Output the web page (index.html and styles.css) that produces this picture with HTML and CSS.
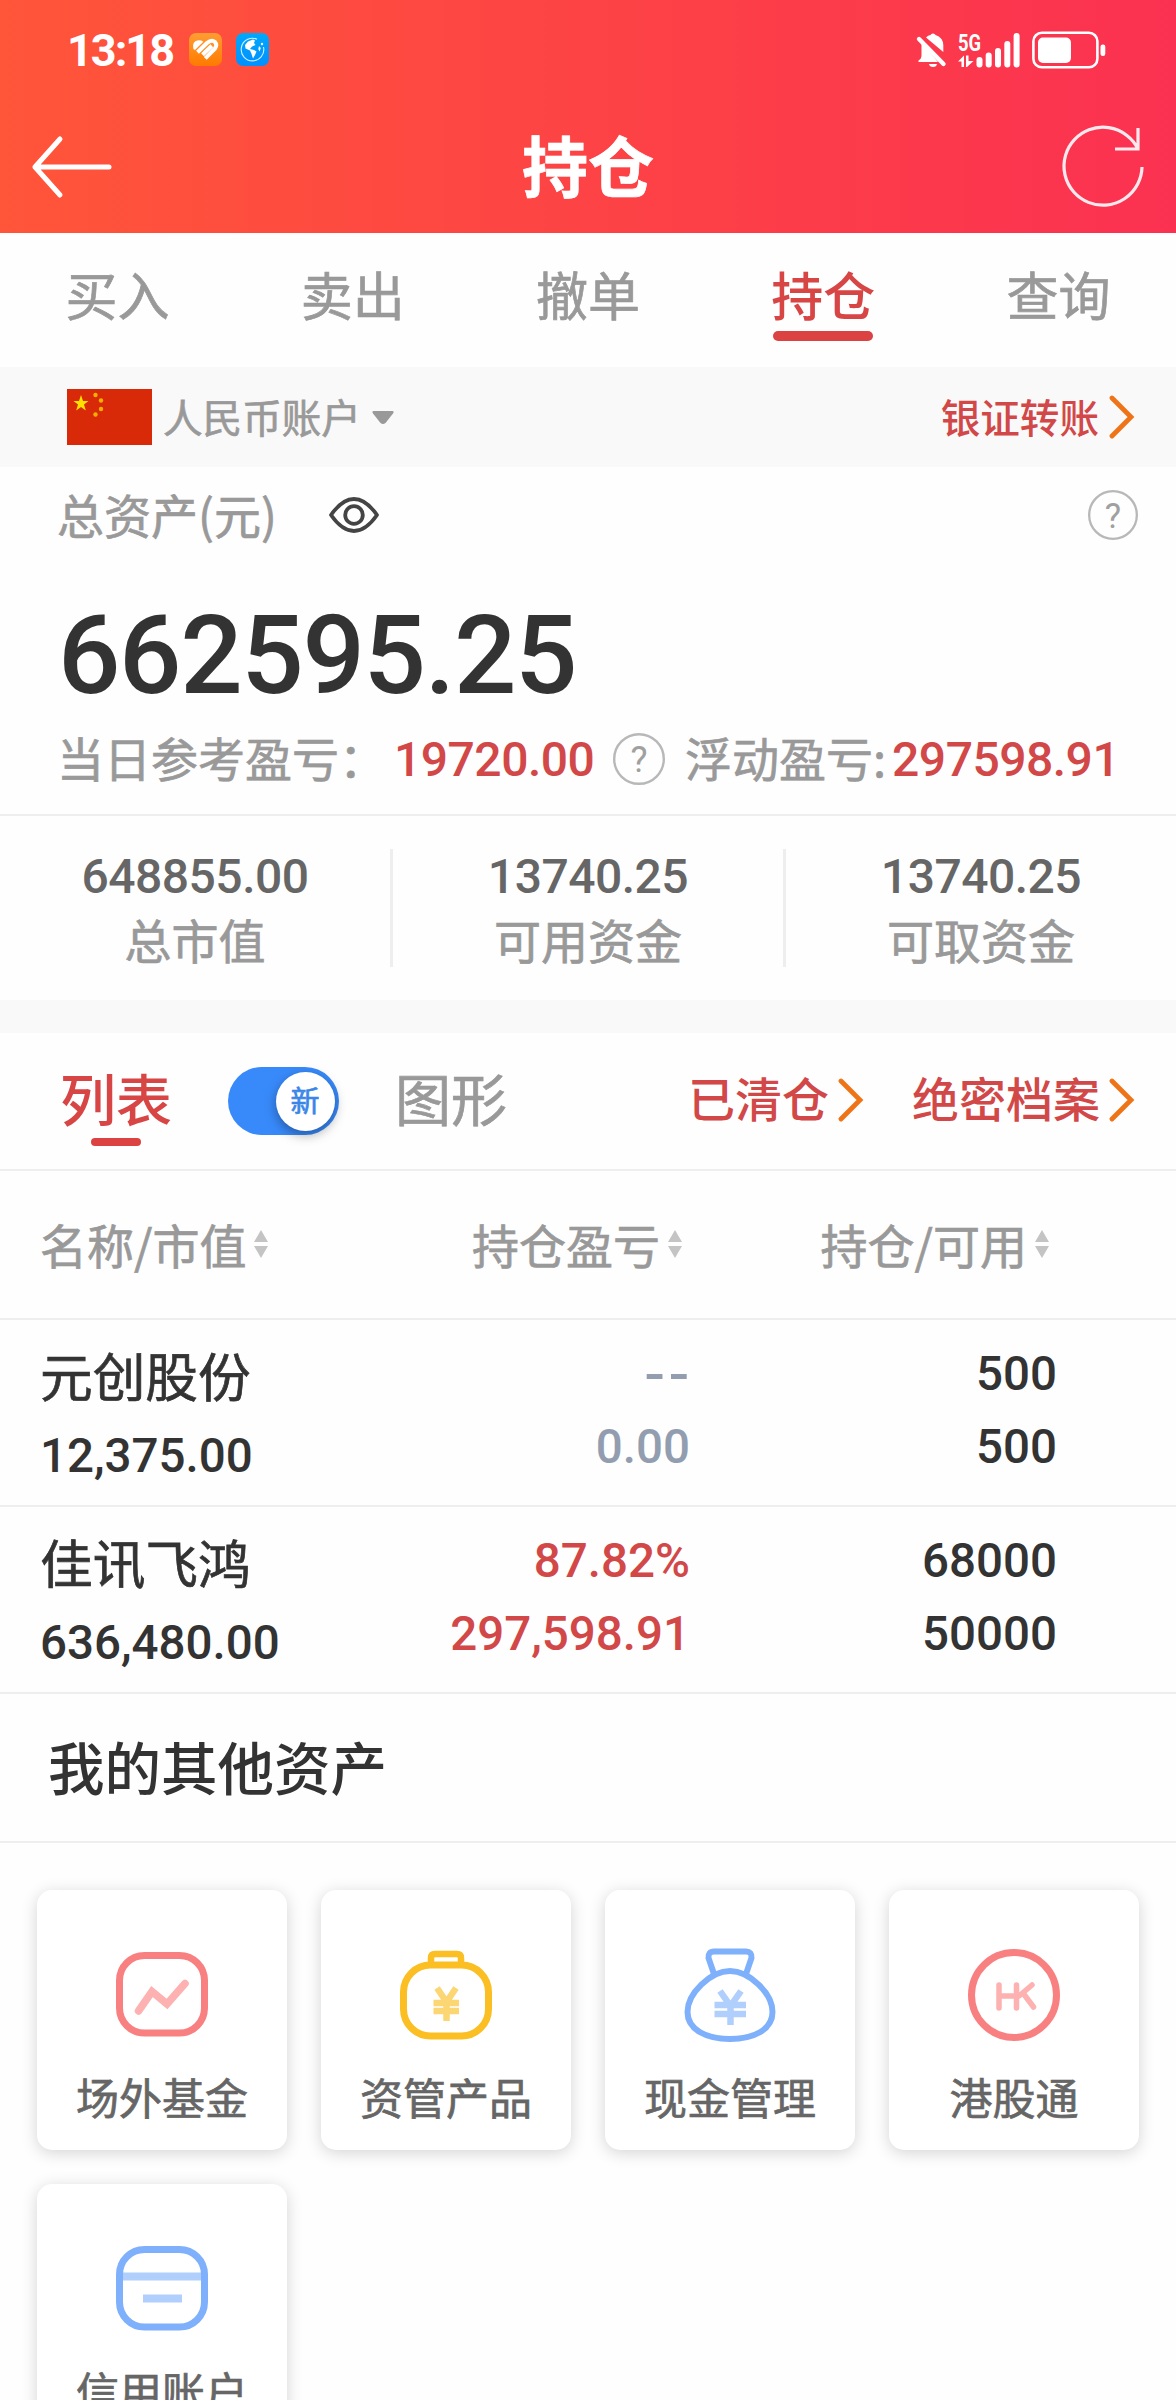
FILE: index.html
```
<!DOCTYPE html>
<html lang="zh-CN">
<head>
<meta charset="utf-8">
<title>持仓</title>
<link rel="stylesheet" href="styles.css">
</head>
<body>
<svg class="defs" aria-hidden="true">
  <symbol id="chevron" viewBox="0 0 26 44"><path d="M3 3 L22 22 L3 41" fill="none" stroke="#ef7418" stroke-width="4.8" stroke-linecap="round" stroke-linejoin="miter"/></symbol>
  <symbol id="sort" viewBox="0 0 14 28"><path d="M7 0L14 12H0zM7 28L14 16H0z" fill="#c4c4c4"/></symbol>
</svg>

<header class="header">
  <div class="status">
    <span class="time">13:18</span>
    <svg class="app-icon app-orange" width="33" height="33" viewBox="0 0 33 33">
      <defs><linearGradient id="og" x2="0" y2="1"><stop stop-color="#ff9d33"/><stop offset="1" stop-color="#ff7a00"/></linearGradient></defs>
      <rect width="33" height="33" rx="7" fill="url(#og)"/>
      <path d="M4.300 15.500Q2.800 8 9.500 7.300Q12.500 7.200 14.300 8.700L6.500 16.500Q5 17.500 4.300 15.500z" fill="#fff"/>
      <path d="M8.500 19.300L18 10Q22.500 6 26 9Q28.500 12 26 15.500L16.300 25.300M13.500 21.800L22.800 12.800" fill="none" stroke="#fff" stroke-width="4" stroke-linejoin="round"/>
    </svg>
    <svg class="app-icon app-blue" width="33" height="33" viewBox="0 0 33 33">
      <defs><linearGradient id="bg" x2="0" y2="1"><stop stop-color="#00a8fb"/><stop offset="1" stop-color="#0090ff"/></linearGradient></defs>
      <rect width="33" height="33" rx="7" fill="url(#bg)"/>
      <path d="M21 6.200A11.300 11.300 0 1 0 27.500 14" fill="none" stroke="#d5efff" stroke-width="1.100"/>
      <path d="M9 12L12 8.500L17 6.500L19 7.500L18 10L19.500 12L16 13.500L14 16L18 17L20.500 18.500L19 22L17 25.500L15.500 21L14 17.500L9.500 15.500z" fill="#fff"/>
      <path d="M23 13L24.800 15L23.500 18.500L22.300 16z" fill="#fff"/><circle cx="26" cy="11" r="1.200" fill="#fff"/>
    </svg>
    <svg class="indicators" width="190" height="38" viewBox="0 0 190 38" fill="#fff">
      <path d="M10 6.500Q12 4 14.500 4Q15 2.500 17 2.500T19.500 4Q27 6.500 27.300 14L27.300 21z"/>
      <path d="M5.500 11L22 31H2.500V29.500Q5.500 28 5.500 24z"/>
      <path d="M13 33H21Q20.500 36 17 36T13 33z"/>
      <path d="M3 8L27.500 33" stroke="#fff" stroke-width="4.400" stroke-linecap="round"/>
      <text class="net" x="42" y="19.500" textLength="23" lengthAdjust="spacingAndGlyphs">5G</text>
      <path d="M42 30.500L48 24.500V36H45.500V30.500zM50 24.500H52.500V30H57.500L51 36H50z"/>
      <rect x="60.500" y="26" width="6" height="10.500" rx="3"/><rect x="69.700" y="21.500" width="6" height="15" rx="3"/><rect x="79" y="17" width="6" height="19.500" rx="3"/><rect x="88.300" y="10" width="6" height="26.500" rx="3"/><rect x="97.600" y="2" width="6" height="34.500" rx="3"/>
      <rect x="117.400" y="1.800" width="64" height="34.500" rx="8.500" fill="none" stroke="#fff" stroke-width="2.600"/>
      <rect x="122" y="6.500" width="33" height="25.500" rx="5"/>
      <rect x="184.500" y="13.500" width="4.800" height="11.500" rx="2.200"/>
    </svg>
  </div>
  <div class="titlebar">
    <svg width="82" height="84" viewBox="0 0 82 84"><path d="M29 15L4 43L29 71M4 43H78" fill="none" stroke="#fff" stroke-width="5" stroke-linecap="round" stroke-linejoin="round"/></svg>
    <h1>持仓</h1>
    <svg width="82" height="84" viewBox="0 0 82 84"><path d="M79 43A39 39 0 1 1 75 25M75 4V25H52" fill="none" stroke="#ffe9ee" stroke-width="3.200"/></svg>
  </div>
</header>

<nav class="tabs">
  <a>买入</a><a>卖出</a><a>撤单</a><a class="on">持仓</a><a>查询</a>
</nav>

<section class="account">
  <svg class="flag" width="85" height="56" viewBox="0 0 85 56"><rect width="85" height="56" fill="#d82a08"/>
    <g fill="#ffe000"><path d="M14 6L16 12H21.500L17 15.500L18.800 21.500L14 18L9.200 21.500L11 15.500L6.500 12H12z"/><g fill="#f3b000"><circle cx="28.500" cy="6" r="2.200"/><circle cx="34" cy="11.500" r="2.200"/><circle cx="34" cy="20" r="2.200"/><circle cx="28.500" cy="25.500" r="2.200"/></g></g></svg>
  <span class="account-name">人民币账户</span>
  <svg class="caret" width="22" height="13" viewBox="0 0 22 13"><path d="M1.500 0H20.500Q22.500 0.500 21 2.500L13.500 12Q11 14 8.500 12L1 2.500Q-0.500 0.500 1.500 0z" fill="#999"/></svg>
  <a class="link push"><span>银证转账</span><svg width="26" height="44"><use href="#chevron"/></svg></a>
</section>

<section class="summary">
  <div class="asset-label">
    <span>总资产(元)</span>
    <svg class="eye" width="50" height="36" viewBox="0 0 50 36" fill="none" stroke="#444" stroke-width="3.800"><path d="M2 18C9 8 16 2 25 2S41 8 48 18C41 28 34 34 25 34S9 28 2 18z" stroke-linejoin="round"/><circle cx="25" cy="18" r="8.800"/></svg>
    <svg class="help push" width="50" height="50" viewBox="0 0 52 52"><circle cx="26" cy="26" r="24.800"/><text x="26" y="39">?</text></svg>
  </div>
  <div class="total">662595.25</div>
  <div class="profit">
    <span>当日参考盈亏：</span><b class="day">19720.00</b>
    <svg class="help" width="52" height="52" viewBox="0 0 52 52"><circle cx="26" cy="26" r="24.800"/><text x="26" y="39">?</text></svg>
    <span class="float-label">浮动盈亏:</span><b class="float">297598.91</b>
  </div>
</section>

<section class="stats">
  <div><b>648855.00</b><span>总市值</span></div>
  <div><b>13740.25</b><span>可用资金</span></div>
  <div><b>13740.25</b><span>可取资金</span></div>
</section>

<section class="views">
  <a class="view on">列表</a>
  <span class="toggle"><i>新</i></span>
  <a class="view">图形</a>
  <a class="link big push"><span>已清仓</span><svg width="26" height="44"><use href="#chevron"/></svg></a>
  <a class="link big"><span>绝密档案</span><svg width="26" height="44"><use href="#chevron"/></svg></a>
</section>

<section class="holdings">
  <div class="row head">
    <span>名称/市值<svg width="14" height="28"><use href="#sort"/></svg></span>
    <span>持仓盈亏<svg width="14" height="28"><use href="#sort"/></svg></span>
    <span>持仓/可用<svg width="14" height="28"><use href="#sort"/></svg></span>
  </div>
  <div class="row">
    <div class="name"><span>元创股份</span><b>12,375.00</b></div>
    <div class="pair flat"><b class="dash">--</b><b>0.00</b></div>
    <div class="pair"><b>500</b><b>500</b></div>
  </div>
  <div class="row">
    <div class="name"><span>佳讯飞鸿</span><b>636,480.00</b></div>
    <div class="pair up"><b>87.82%</b><b>297,598.91</b></div>
    <div class="pair"><b>68000</b><b>50000</b></div>
  </div>
</section>

<h2 class="other-title">我的其他资产</h2>
<section class="cards">
  <a class="card">
    <svg width="100" height="100" viewBox="0 0 100 100" fill="none"><rect x="7.500" y="10.500" width="85" height="77.500" rx="25" stroke="#f98080" stroke-width="7"/><path d="M26.500 66L40 46.500L55 59L73 38.500" stroke="#fdb1b1" stroke-width="7.500" stroke-linecap="round"/></svg>
    <span>场外基金</span></a>
  <a class="card">
    <svg width="100" height="100" viewBox="0 0 100 100" fill="none"><g stroke="#fbbf24"><rect x="7.500" y="20" width="85" height="71" rx="27" stroke-width="7"/><path d="M35 18V13Q35 9 39 9H61Q65 9 65 13V18" stroke-width="6.500"/></g><path d="M41 43L50.500 57L60 43M50.500 55V76M37.500 58H63M37.500 66H63" stroke="#fdd674" stroke-width="6.500"/></svg>
    <span>资管产品</span></a>
  <a class="card">
    <svg width="100" height="100" viewBox="0 0 100 100" fill="none"><g stroke="#7fb0fb" stroke-width="6"><path d="M34 29L28.500 13Q28 6.500 34 6.500H66Q72 6.500 71.500 13L66 29"/><path d="M50 26C31 26 7.500 48 7.500 67C7.500 85 27 94 50 94S92.500 85 92.500 67C92.500 48 69 26 50 26z"/></g><path d="M40 46L50.500 61L61 46M50.500 59V80M34.500 60H66M34.500 69H66" stroke="#b0cffd" stroke-width="6.500"/></svg>
    <span>现金管理</span></a>
  <a class="card">
    <svg width="100" height="100" viewBox="0 0 100 100" fill="none"><circle cx="50" cy="50" r="42.500" stroke="#f98080" stroke-width="7"/><path d="M35 40V63M35 51H52M52.500 40V63M68 40L55 51M59 48L69.500 62" stroke="#fdb1b1" stroke-width="5.500" stroke-linecap="round"/></svg>
    <span>港股通</span></a>
  <a class="card">
    <svg width="100" height="100" viewBox="0 0 100 100" fill="none"><path d="M10 37.500H90M31 59.500H70" stroke="#b0cffd" stroke-width="8"/><rect x="7.500" y="10.500" width="85" height="77.500" rx="25" stroke="#7fb0fb" stroke-width="7"/></svg>
    <span>信用账户</span></a>
</section>
</body>
</html>
```
FILE: styles.css
```
* { box-sizing: border-box; margin: 0; padding: 0; }
body {
  width: 1176px; height: 2400px; overflow: hidden; background: #fefefe;
  font-family: "Noto Sans CJK SC", sans-serif; font-size: 47px; color: #999;
  -webkit-text-stroke: 0.7px currentColor;
}
svg { display: block; flex: none; overflow: visible; -webkit-text-stroke: 0; }
.defs { display: none; }
b, .total, .time { font-family: Roboto, "Liberation Sans", sans-serif; font-weight: 500; letter-spacing: -0.5px; -webkit-text-stroke: 0; }
.push { margin-left: auto; }

.header { height: 233px; background: linear-gradient(90deg, #ff5539, #fb3151); color: #fff; }
.status { display: flex; align-items: center; height: 99px; padding: 0 70px 0 67px; }
.time { font-size: 45px; font-weight: 700; width: 122px; line-height: 97px; padding-top: 2px; letter-spacing: -2px; }
.app-blue { margin-left: 14px; }
.indicators { margin-left: auto; }
.net { font: 700 23px Roboto, sans-serif; }
.titlebar { display: flex; align-items: center; justify-content: space-between; height: 134px; padding: 0 31px 0 31px; }
h1 { font-size: 66px; line-height: 132px; font-weight: 700; height: 138px; }

.tabs { display: grid; grid-template-columns: repeat(5, 1fr); height: 134px; }
.tabs a { display: flex; flex-direction: column; align-items: center; font-size: 52px; line-height: 121px; height: 134px; }
.tabs .on { color: #d84545; font-weight: 500; -webkit-text-stroke: 0; }
.tabs .on::after { content: ""; width: 100px; height: 10px; margin-top: -23px; border-radius: 5px; background: #dc4242; }

.account { display: flex; align-items: center; height: 100px; padding: 0 41px 0 67px; background: #f9f9f9; font-size: 39.600px; }
.account-name { margin: 0 11px 0 11px; line-height: 96px; height: 98px; }
.link { display: flex; align-items: center; gap: 10px; color: #d24848; font-weight: 500; -webkit-text-stroke: 0; }
.link span { line-height: 96px; height: 98px; }

.summary { height: 347px; }
.asset-label { display: flex; align-items: center; height: 96px; padding: 0 38px 0 57px; line-height: 94px; }
.asset-label span { height: 96px; }
.eye { margin-left: 52px; }
.help { fill: none; stroke: #b8b8b8; stroke-width: 2.400; }
.help text { font: 400 36px Roboto, sans-serif; fill: #a0a0a0; stroke: none; text-anchor: middle; }
.total { font-size: 110px; line-height: 122px; height: 149px; padding: 32px 0 0 58px; color: #333; letter-spacing: -1.400px; }
.profit { display: flex; align-items: center; height: 94px; padding-left: 57px; line-height: 90px; white-space: nowrap; }
.profit span { line-height: 86px; height: 90px; }
.profit b { color: #d24848; font-size: 48px; line-height: 92px; height: 90px; }
.day { margin-left: 8px; width: 219px; }
.float-label { margin-left: 20px; }
.float { margin-left: 6px; }

.stats { display: grid; grid-template-columns: 393px 393px 393px; height: 219px; padding-top: 33px; border-top: 2px solid #eee; border-bottom: 33px solid #f9f9f9; }
.stats div { display: flex; flex-direction: column; align-items: center; height: 118px; border-right: 3px solid #eee; }
.stats div:last-child { border-color: transparent; }
.stats b { font-size: 48px; line-height: 56px; color: #666; }
.stats span { line-height: 68px; }

.views { display: flex; align-items: center; height: 138px; padding: 0 41px 0 60px; border-bottom: 2px solid #eee; line-height: 134px; }
.view { font-size: 56px; line-height: 128px; height: 136px; display: flex; flex-direction: column; align-items: center; }
.view.on { color: #d84545; font-weight: 500; -webkit-text-stroke: 0; }
.view.on::after { content: ""; width: 50px; height: 8px; margin-top: -23px; border-radius: 4px; background: #dc4242; }
.toggle { width: 111px; height: 68px; margin: 0 56px; border-radius: 34px; background: #388afb; padding: 4.500px; display: flex; justify-content: flex-end; }
.toggle i { width: 59px; height: 59px; border-radius: 50%; background: #fff; color: #3a86e8; font-style: normal; font-size: 29px; line-height: 55px; text-align: center; box-shadow: 0 4px 12px rgba(0,0,0,.35); }
.link.big { gap: 9px; }
.link.big svg { margin-top: -2px; }
.link.big span { line-height: 126px; height: 134px; }
.link.big + .link.big { margin-left: 48px; }

.row { display: grid; grid-template-columns: 40px 300px 350px 367px; height: 187px; border-bottom: 2px solid #eee; color: #333; }
.row > :first-child { grid-column: 2; }
.head { height: 149px; color: #999; line-height: 135px; grid-template-columns: 40px 300px 342px 367px; }
.head span { display: flex; align-items: center; gap: 8px; justify-self: end; white-space: nowrap; height: 144px; }
.head svg { margin-top: 2px; }
.head span:first-child { justify-self: start; }
.name { display: flex; flex-direction: column; padding-top: 22px; white-space: nowrap; }
.name span { font-size: 52.700px; line-height: 64px; }
.name b { line-height: 101px; font-size: 47.500px; letter-spacing: 0; }
.pair { display: flex; flex-direction: column; align-items: flex-end; padding-top: 18px; font-size: 47.500px; }
.pair b { line-height: 73px; letter-spacing: 0; }
.pair .dash { font-size: 66px; font-weight: 400; letter-spacing: 6px; margin-right: -4px; }
.flat { color: #929db0; }
.up { color: #d24848; }

.other-title { height: 149px; padding-left: 48px; border-bottom: 2px solid #eee; color: #333; font-size: 56.500px; font-weight: 500; line-height: 142px; -webkit-text-stroke: 0; }
.cards { display: grid; grid-template-columns: repeat(4, 250px); gap: 34px; padding: 47px 37px 0; }
.card { display: flex; flex-direction: column; align-items: center; height: 260px; padding-top: 55px; border-radius: 15px; background: #fff; box-shadow: 0 3px 16px rgba(0,0,0,.17); font-size: 43px; line-height: 60px; color: #666; }
.card span { margin-top: 21px; }
```
